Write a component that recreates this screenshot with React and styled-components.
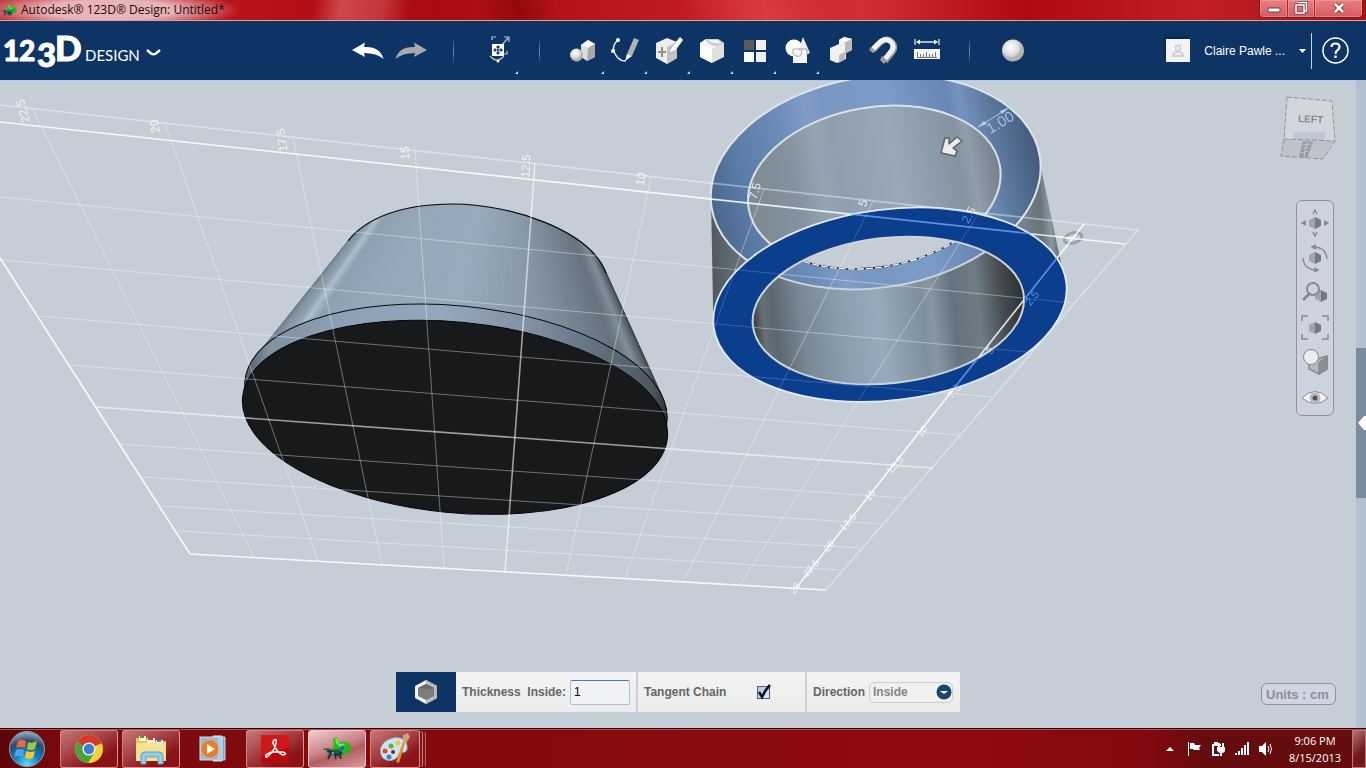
import React, { useState } from 'react';

import styled, { createGlobalStyle, css } from 'styled-components';

const GlobalStyle = createGlobalStyle`
  * {
    box-sizing: border-box;
  }

  html, body, #root {
    height: 100%;
    margin: 0;
  }

  body {
    font-family: "Liberation Sans", Arial, sans-serif;
    font-size: 12px;
    overflow: hidden;
  }

  button {
    padding: 0;
    border: 0;
    background: none;
    font: inherit;
    color: inherit;
  }

  svg {
    display: block;
  }
`;

const Desktop = styled.div`
  display: flex;
  flex-direction: column;
  height: 100vh;
`;

/* ---------- window title ---------- */

const TitleBar = styled.header`
  display: flex;
  align-items: flex-start;
  justify-content: space-between;
  height: 21px;
  padding: 0 3px 0 1px;
  border-bottom: 1px solid #e0a09c;
  background:
    radial-gradient(ellipse 130px 20px at 110px 10px, rgba(240, 205, 208, 0.85) 50%, rgba(240, 190, 190, 0) 100%),
    linear-gradient(100deg, transparent 23%, rgba(225, 110, 110, 0.6) 25%, rgba(205, 70, 75, 0.7) 28%, transparent 30%),
    linear-gradient(75deg, transparent 35%, rgba(120, 0, 0, 0.5) 38%, transparent 41%, transparent 50%, rgba(225, 70, 70, 0.7) 56%, transparent 61%),
    linear-gradient(to right, #c03038 0%, #b81016 20%, #a80c10 32%, #c01c20 50%, #d03034 63%, #b00a0e 75%, #c02024 88%, #a81014 100%);
`;

const WindowTitle = styled.h1`
  display: flex;
  align-items: center;
  gap: 4px;
  height: 20px;
  margin: 0;
  color: #1a0a0c;
  font: 400 12px/20px "Open Sans", "Noto Sans", sans-serif;
`;

const WindowButtons = styled.div`
  display: flex;
  height: 18px;
  border: 1px solid #7a2024;
  border-top: 0;
  border-radius: 0 0 5px 5px;
  overflow: hidden;
`;

const WindowButton = styled.button`
  display: flex;
  justify-content: center;
  width: ${props => (props.$wide ? '48px' : '27px')};
  background: linear-gradient(#e88084, #d85a60);
  box-shadow: inset 0 0 0 1px rgba(255, 190, 190, 0.35);

  & + & {
    border-left: 1px solid #9a2c30;
  }
`;

/* ---------- application toolbar ---------- */

const Toolbar = styled.div`
  display: flex;
  align-items: center;
  height: 59px;
  flex-shrink: 0;
  background: #0d3464;
  color: #fff;
`;

const Brand = styled.button`
  flex: 0 0 346px;
  text-align: left;
`;

const Tools = styled.nav`
  display: flex;
  height: 100%;
`;

const ToolButton = styled.button`
  position: relative;
  display: flex;
  align-items: center;
  justify-content: center;
  width: 43px;
  height: 59px;

  ${props => props.$menu && css`
    &::after {
      content: "";
      position: absolute;
      right: 0;
      bottom: 6px;
      border-left: 3px solid transparent;
      border-bottom: 3px solid #d5dde8;
    }
  `}
`;

const ToolSeparator = styled.div`
  display: flex;
  align-items: center;
  justify-content: center;
  width: 43px;

  &::after {
    content: "";
    width: 1px;
    height: 26px;
    background: linear-gradient(transparent, #7c8ea6, transparent);
  }
`;

const Account = styled.div`
  display: flex;
  align-items: center;
  height: 36px;
  margin-left: auto;
  padding-right: 17px;
`;

const AccountMenu = styled.button`
  display: flex;
  align-items: center;
  gap: 14px;
  height: 36px;
  padding-right: 5px;
  border-right: 1px solid #c9d3e0;
`;

const Avatar = styled.span`
  display: flex;
  align-items: center;
  justify-content: center;
  width: 24px;
  height: 23px;
  background: #f3f3f3;
  box-shadow: -2px -3px 2px #0b2a4c;
`;

const HelpButton = styled.button`
  margin-left: 10px;
`;

/* ---------- workspace ---------- */

const Workspace = styled.main`
  display: flex;
  flex: 1;
  min-height: 0;
`;

const Viewport = styled.section`
  position: relative;
  flex: 1;
  min-width: 0;
  overflow: hidden;
  background: #c5cdd7;
  box-shadow: inset 0 1px 0 #b6c9e2;
`;

const Scene = styled.svg`
  width: 100%;
  height: 100%;
`;

const GridLabel = styled.text`
  font-family: "Liberation Sans", Arial, sans-serif;
  text-anchor: middle;
  dominant-baseline: central;
`;

const SidePanel = styled.aside`
  display: flex;
  align-items: center;
  width: 10px;
  padding-top: 38px;
  background: #b2c0d2;
`;

const PanelHandle = styled.button`
  display: flex;
  align-items: center;
  justify-content: flex-end;
  width: 10px;
  height: 150px;
  background: #7a8b9d;
`;

const CubeHolder = styled.div`
  position: absolute;
  top: 14px;
  right: 18px;
`;

const ViewBar = styled.div`
  position: absolute;
  top: 120px;
  right: 22px;
  display: flex;
  flex-direction: column;
  justify-content: space-around;
  align-items: center;
  width: 38px;
  height: 216px;
  padding-top: 4px;
  border: 1px solid #8d939b;
  border-radius: 6px;
  background: #ccd3df;
`;

const UnitsButton = styled.button`
  position: absolute;
  right: 20px;
  bottom: 23px;
  width: 75px;
  height: 22px;
  padding-left: 4px;
  border: 1px solid #8d929b;
  border-radius: 6px;
  background: #d0d5e3;
  color: #8b9099;
  font-size: 13px;
  font-weight: 700;
  text-align: left;
`;

const PropertyBar = styled.form`
  position: absolute;
  left: 50%;
  bottom: 16px;
  display: flex;
  height: 40px;
  transform: translateX(-50%);
  background: linear-gradient(#f3f3f3, #ececec);
  color: #666;
  font-weight: 700;
`;

const PropertyIcon = styled.div`
  display: flex;
  align-items: center;
  justify-content: center;
  width: 60px;
  background: #0d3464;
`;

const PropertyCell = styled.div`
  display: flex;
  align-items: center;
  gap: ${props => props.$gap || '4px'};
  width: ${props => props.$width};
  padding-left: 6px;
  border-right: ${props => (props.$last ? '0' : '2px solid #cfcfcf')};
  white-space: pre;
`;

const NumberInput = styled.input`
  width: 60px;
  height: 25px;
  padding: 0 3px;
  border: 1px solid #9fc3dc;
  border-top-color: #4a7ba6;
  border-radius: 2px;
  background: #f1f2f3;
  color: #000;
  font: 400 12px "Liberation Sans", Arial, sans-serif;
`;

const CheckHolder = styled.span`
  position: relative;
  width: 16px;
  height: 16px;
`;

const CheckInput = styled.input`
  appearance: none;
  width: 13px;
  height: 13px;
  margin: 2px 0 0 1px;
  border: 1px solid #4a6484;
  background: linear-gradient(135deg, #b4c2d2, #e8edf3);
`;

const CheckMark = styled.svg`
  position: absolute;
  inset: 0;
  pointer-events: none;
`;

const SelectHolder = styled.span`
  position: relative;
  display: flex;
`;

const Select = styled.select`
  appearance: none;
  width: 84px;
  height: 21px;
  padding: 0 20px 0 3px;
  border: 1px solid #cdcdcd;
  border-radius: 5px;
  background: #f0f0f0;
  color: #858585;
  font: 700 12px "Liberation Sans", Arial, sans-serif;
`;

const SelectArrow = styled.svg`
  position: absolute;
  top: 2px;
  right: 1px;
  pointer-events: none;
`;

/* ---------- taskbar ---------- */

const Taskbar = styled.footer`
  display: flex;
  height: 40px;
  flex-shrink: 0;
  border-top: 1px solid #2c0306;
  box-shadow: inset 0 1px 0 #b05055;
  background: linear-gradient(to right, #5c0508 0%, #7c0a0d 5%, #860a0d 40%, #8f0a0e 70%, #83090d 84%, #650c0f 88%, #650c0f 100%);
`;

const StartButton = styled.button`
  width: 60px;
  padding-left: 8px;
`;

const TaskButtons = styled.div`
  display: flex;
  gap: 4px;
  padding-top: 1px;
`;

const TaskButton = styled.button`
  display: flex;
  align-items: center;
  justify-content: center;
  width: ${props => (props.$stacked ? '50px' : '58px')};
  height: 38px;
  border-radius: 3px;

  ${props => props.$open && css`
    border: 1px solid rgba(235, 165, 165, 0.75);
    background: linear-gradient(150deg, rgba(235, 180, 180, 0.65) 0%, rgba(200, 110, 115, 0.5) 45%, rgba(150, 30, 35, 0.45) 75%);
  `}

  ${props => props.$active && css`
    border-color: #f0c8c8;
    background: linear-gradient(160deg, #f0d0d0 0%, #c98388 45%, #b45c62 60%, #d79a9e 100%);
  `}

  ${props => props.$stacked && css`
    box-shadow: 3px 0 0 -1px #7d1418, 4px 0 0 -1px #c87b7e, 7px 0 0 -2px #7d1418, 8px 0 0 -2px #b4666a;
  `}
`;

const Tray = styled.div`
  display: flex;
  align-items: center;
  gap: 8px;
  margin-left: auto;
  color: #fff;
`;

const Clock = styled.time`
  width: 66px;
  font: 400 11px/17px "Open Sans", "Noto Sans", sans-serif;
  text-align: center;
  white-space: pre-line;
`;

const ShowDesktop = styled.button`
  width: 14px;
  height: 38px;
  margin-left: -4px;
  border: 1px solid #b97a7c;
  background: linear-gradient(135deg, #b07478, #74181c 60%);
`;

/* ---------- model data ---------- */

// each line: x1, y1, x2, y2, strength
const GRID_LINES = [
  [0, 105, 1138, 230, 'edge'],
  [0, 122, 1125, 244, 'axis'],
  [1138, 230, 826, 590, 'edge'],
  [190, 554, 826, 590, 'axis'],
  [0, 258, 190, 554, 'axis'],
  [1084, 224, 796, 588, 'axis'],
  [32, 108, 254, 557, 'minor'],
  [165, 123, 318, 560, 'minor'],
  [293, 138, 382, 565, 'minor'],
  [415, 151, 444, 568, 'minor'],
  [535, 163, 505, 572, 'major'],
  [651, 177, 566, 574, 'minor'],
  [764, 189, 625, 578, 'minor'],
  [873, 201, 683, 582, 'minor'],
  [979, 213, 740, 585, 'minor'],
  [0, 197, 1073, 303, 'minor'],
  [2, 260, 1028, 352, 'minor'],
  [39, 316, 992, 397, 'minor'],
  [70, 365, 959, 435, 'minor'],
  [96, 407, 932, 468, 'major'],
  [120, 444, 905, 498, 'minor'],
  [141, 477, 882, 524, 'minor'],
  [161, 506, 860, 548, 'minor'],
  [178, 531, 841, 570, 'minor']
];

const LINE_STYLES = {
  axis: { opacity: 0.85, width: 1.7 },
  edge: { opacity: 0.4, width: 1.7 },
  major: { opacity: 0.58, width: 1.6 },
  minor: { opacity: 0.38, width: 1 }
};

// text, x, y, angle, size
const GRID_LABELS = [
  ['22.5', 23, 111, -106, 12],
  ['20', 155, 126, -100, 12],
  ['17.5', 282, 140, -97, 12],
  ['15', 405, 153, -92, 12],
  ['12.5', 526, 166, -86, 12],
  ['10', 641, 179, -80, 12],
  ['7.5', 755, 191, -74, 12],
  ['5', 863, 203, -68, 12],
  ['2.5', 969, 215, -62, 12],
  ['2.5', 1032, 298, -52, 11],
  ['5', 990, 350, -50, 11],
  ['7.5', 954, 391, -50, 11],
  ['10', 922, 431, -48, 10],
  ['12.5', 895, 465, -48, 10],
  ['15', 870, 495, -48, 10],
  ['17.5', 848, 522, -48, 10],
  ['20', 829, 546, -48, 10],
  ['22.5', 811, 568, -48, 10],
  ['25', 795, 588, -48, 10]
];

const CONE_SHADES = [
  [0, 104, 118, 130],
  [0.07, 128, 145, 159],
  [0.12, 142, 160, 175],
  [0.145, 172, 191, 206],
  [0.18, 142, 160, 177],
  [0.3, 149, 167, 185],
  [0.47, 151, 169, 187],
  [0.6, 136, 152, 168],
  [0.72, 112, 127, 139],
  [0.8, 100, 112, 122],
  [0.86, 126, 141, 154],
  [0.91, 94, 105, 114],
  [1, 62, 68, 72]
];

const shadeAt = t => {
  const next = Math.max(1, CONE_SHADES.findIndex(stop => stop[0] >= t));
  const a = CONE_SHADES[next - 1];
  const b = CONE_SHADES[next];
  const k = (t - a[0]) / (b[0] - a[0]);
  const mix = [1, 2, 3].map(i => Math.round(a[i] + (b[i] - a[i]) * k));
  return `rgb(${mix.join(',')})`;
};

const bezier = (p, t) => [0, 1].map(i =>
  (1 - t) ** 3 * p[0][i] + 3 * (1 - t) ** 2 * t * p[1][i] + 3 * (1 - t) * t * t * p[2][i] + t ** 3 * p[3][i]
);

const coneTop = t => (t < 0.36
  ? bezier([[348, 241], [365, 219], [400, 204], [453, 204]], t / 0.36)
  : bezier([[453, 204], [510, 204], [590, 230], [606, 273]], (t - 0.36) / 0.64));

const coneBottom = t => {
  const angle = ((201 + 144 * t) * Math.PI) / 180;
  const tilt = (5.5 * Math.PI) / 180;
  const u = 211.8 * Math.cos(angle);
  const v = 95.3 * Math.sin(angle);
  return [456 + u * Math.cos(tilt) - v * Math.sin(tilt), 401 + u * Math.sin(tilt) + v * Math.cos(tilt)];
};

const SLICES = 120;

const ConeSide = () => (
  <g>
    {Array.from({ length: SLICES }, (_, i) => {
      const t0 = i / SLICES;
      const t1 = (i + 1) / SLICES;
      const color = shadeAt((t0 + t1) / 2);
      const points = [coneTop(t0), coneTop(t1), coneBottom(t1), coneBottom(t0)];
      return <polygon key={i} points={points.join(' ')} fill={color} stroke={color} strokeWidth="0.6" />;
    })}
  </g>
);

const Grid = ({ color, mask }) => (
  <g mask={`url(#${mask})`} stroke={color} fill={color}>
    {GRID_LINES.map(([x1, y1, x2, y2, kind], i) => (
      <line key={i} x1={x1} y1={y1} x2={x2} y2={y2} strokeWidth={LINE_STYLES[kind].width} opacity={LINE_STYLES[kind].opacity} />
    ))}
    {GRID_LABELS.map(([text, x, y, angle, size]) => (
      <GridLabel key={`${text}-${y}`} x={x} y={y} fontSize={size} stroke="none" opacity="0.8" transform={`rotate(${angle} ${x} ${y})`}>
        {text}
      </GridLabel>
    ))}
  </g>
);

const BackOuter = props => <ellipse cx="875.7" cy="182" rx="166.1" ry="105.6" transform="rotate(-8.7 875.7 182)" {...props} />;
const BackInner = props => <ellipse cx="874.3" cy="187.3" rx="127.4" ry="80" transform="rotate(-9.7 874.3 187.3)" {...props} />;
const FrontOuter = props => <ellipse cx="890" cy="304.7" rx="177.7" ry="95.4" transform="rotate(-7.2 890 304.7)" {...props} />;
const FrontInner = props => <ellipse cx="888.3" cy="310.5" rx="136.3" ry="72.7" transform="rotate(-6.4 888.3 310.5)" {...props} />;

const Model = () => (
  <Scene viewBox="0 80 1356 648" preserveAspectRatio="xMidYMid slice" aria-label="3D model">
    <defs>
      <linearGradient id="band" x1="0" x2="1">
        <stop offset="0" stopColor="#53606a" />
        <stop offset="0.05" stopColor="#8091a0" />
        <stop offset="0.2" stopColor="#8b9fb6" />
        <stop offset="0.45" stopColor="#95a8bb" />
        <stop offset="0.65" stopColor="#8092a5" />
        <stop offset="0.85" stopColor="#5d6a78" />
        <stop offset="0.96" stopColor="#4d5760" />
        <stop offset="1" stopColor="#282c30" />
      </linearGradient>
      <linearGradient id="cylinder" gradientUnits="userSpaceOnUse" x1="711" x2="1066" y1="240" y2="215">
        <stop offset="0" stopColor="#50595f" />
        <stop offset="0.08" stopColor="#66727b" />
        <stop offset="0.88" stopColor="#77838c" />
        <stop offset="0.93" stopColor="#68747c" />
        <stop offset="0.955" stopColor="#8b989f" />
        <stop offset="0.98" stopColor="#535c62" />
        <stop offset="1" stopColor="#41484c" />
      </linearGradient>
      <linearGradient id="preview" gradientUnits="userSpaceOnUse" x1="711" x2="1041" y1="190" y2="165">
        <stop offset="0" stopColor="#4b678c" />
        <stop offset="0.1" stopColor="#5a7ba5" />
        <stop offset="0.25" stopColor="#6c8cb9" />
        <stop offset="0.34" stopColor="#7e9cc6" />
        <stop offset="0.4" stopColor="#7897c3" />
        <stop offset="0.6" stopColor="#7b9ac5" />
        <stop offset="0.76" stopColor="#6886b3" />
        <stop offset="0.8" stopColor="#7593bf" />
        <stop offset="0.88" stopColor="#5c799f" />
        <stop offset="1" stopColor="#42597a" />
      </linearGradient>
      <linearGradient id="backWall" x1="0" x2="1">
        <stop offset="0" stopColor="#7c8993" />
        <stop offset="0.2" stopColor="#84939f" />
        <stop offset="0.3" stopColor="#94a4b0" />
        <stop offset="0.37" stopColor="#8f9faf" />
        <stop offset="0.6" stopColor="#98a8b8" />
        <stop offset="0.84" stopColor="#84939f" />
        <stop offset="0.89" stopColor="#909eaa" />
        <stop offset="1" stopColor="#74808a" />
      </linearGradient>
      <linearGradient id="frontWall" x1="0" x2="1">
        <stop offset="0" stopColor="#333a3e" />
        <stop offset="0.04" stopColor="#667077" />
        <stop offset="0.08" stopColor="#5b6770" />
        <stop offset="0.18" stopColor="#788793" />
        <stop offset="0.32" stopColor="#8a9dad" />
        <stop offset="0.46" stopColor="#98aabc" />
        <stop offset="0.62" stopColor="#7f909e" />
        <stop offset="0.66" stopColor="#8796a2" />
        <stop offset="0.74" stopColor="#65737e" />
        <stop offset="0.83" stopColor="#6f7b84" />
        <stop offset="0.93" stopColor="#41474b" />
        <stop offset="1" stopColor="#2c3032" />
      </linearGradient>
      <clipPath id="hole"><FrontInner /></clipPath>
      <mask id="offRing" maskUnits="userSpaceOnUse" x="0" y="0" width="1366" height="768">
        <rect width="1366" height="768" fill="#fff" />
        <FrontOuter fill="#000" />
        <FrontInner fill="#fff" />
      </mask>
      <mask id="onRing" maskUnits="userSpaceOnUse" x="0" y="0" width="1366" height="768">
        <FrontOuter fill="#fff" />
        <FrontInner fill="#000" />
      </mask>
    </defs>

    {/* cone */}
    <ConeSide />
    <path d="M348,241C365,219 400,204 453,204C510,204 590,230 606,273" fill="none" stroke="#0a0a0a" strokeWidth="1.2" />
    <ellipse cx="456" cy="401" rx="212" ry="95.3" transform="rotate(5.5 456 401)" fill="url(#band)" stroke="#0a0a0a" />
    <ellipse cx="455" cy="417.3" rx="213.4" ry="95.3" transform="rotate(5.5 455 417.3)" fill="#18191b" stroke="#050505" />

    {/* ring */}
    <path d="M711,196L713.300,322L1065,282L1041,168Z" fill="url(#cylinder)" />
    <BackOuter fill="url(#preview)" stroke="#dfe5eb" strokeWidth="2" />
    <BackInner fill="url(#backWall)" stroke="#dbe0e4" strokeWidth="2" />
    <FrontOuter fill="#0b3f8d" stroke="#e4ebf4" strokeWidth="1.8" />
    <FrontInner fill="url(#frontWall)" />
    <g clipPath="url(#hole)">
      <BackOuter fill="url(#preview)" stroke="#ccd3d9" strokeWidth="2" />
      <BackInner fill="#c5cdd7" stroke="#20262c" strokeWidth="1.600" />
      <BackInner fill="none" stroke="#f2f5f7" strokeWidth="1.400" strokeDasharray="7 2" />
    </g>
    <FrontInner fill="none" stroke="#d0d3d5" strokeWidth="2" />

    <Grid color="#ffffff" mask="offRing" />
    <Grid color="#6b9df5" mask="onRing" />
    <ellipse cx="1073" cy="238" rx="9" ry="5" transform="rotate(-15 1073 238)" fill="none" stroke="#9ba1a8" strokeWidth="3" />
    <line x1="1066" y1="247" x2="1080" y2="229" stroke="#f2f5f8" strokeWidth="1.5" />
    <line x1="1060" y1="237" x2="1088" y2="240" stroke="#f2f5f8" strokeWidth="1.5" />

    {/* thickness dimension */}
    <g stroke="#b5cff0" fill="#b5cff0">
      <path d="M978,127L1010,107" fill="none" />
      <path d="M978,127L984,121L987,124ZM1010,107L1000,111L1002,114Z" stroke="none" />
    </g>
    <GridLabel x="1000" y="122" fontSize="15" fill="#a4bfe3" transform="rotate(-31 1000 122)">1.00</GridLabel>
    <path d="M941,153L945,138L949,138L949,144L957,137L962,141L953,148L957,151L955,156Z" fill="#efedeb" stroke="#58636c" strokeWidth="1.5" strokeLinejoin="round" />
  </Scene>
);

/* ---------- icons ---------- */

const Frog = ({ size }) => (
  <svg width={size} height={Math.round(size * 0.8)} viewBox="0 0 30 24">
    <path d="M12,8L11,2L15,0L17,6Q23,3 28,7Q31,12 27,16Q21,20 15,17L9,14Z" fill="#28b51f" />
    <path d="M14,6L13,2L15,1L17,7Q21,6 24,7L18,10Z" fill="#6cf04a" />
    <path d="M1,12Q6,10 11,13L17,12L21,17L17,20L9,17L5,21L7,16Z" fill="#235a48" />
    <path d="M3,14L10,15L15,18L20,15M6,22L9,17M14,22L13,18M19,22L18,18" stroke="#0f3040" strokeWidth="1.5" fill="none" />
    <circle cx="20" cy="11" r="2" fill="#1760c8" />
    <circle cx="4" cy="14" r="1" fill="#90c8b8" />
    <circle cx="11" cy="16" r="1" fill="#90c8b8" />
  </svg>
);

const Logo = () => (
  <svg width="170" height="59" viewBox="0 21 170 59" fill="#fff" aria-label="123D Design">
    <g fontFamily="Lato, sans-serif" fontWeight="900" stroke="#fff">
      <text x="3" y="61" fontSize="28">1</text>
      <text x="19" y="61" fontSize="28">2</text>
      <text x="37" y="67" fontSize="33">3</text>
      <text x="55" y="61" fontSize="35">D</text>
    </g>
    <text x="85" y="61" fontSize="15" fontFamily="Lato, sans-serif">DESIGN</text>
    <path d="M147,50L151,53.500Q153.500,55 156,53.500L160,50" fill="none" stroke="#fff" strokeWidth="2.400" />
  </svg>
);

const ToolSvg = ({ children }) => <svg width="32" height="32" viewBox="0 0 32 32">{children}</svg>;

const UndoIcon = () => (
  <ToolSvg><path d="M0,15L13,7.500L12,12Q28,11 31.500,24Q25,18 12,18L13,22Z" fill="#fff" /></ToolSvg>
);

const RedoIcon = () => (
  <ToolSvg><path d="M32,15L19,7.500L20,12Q4,11 .5,24Q7,18 20,18L19,22Z" fill="#a9a9a9" /></ToolSvg>
);

const TransformIcon = () => (
  <ToolSvg>
    <g transform="translate(3 -1)">
      <g fill="none" stroke="#b9c6d6" strokeWidth="1.200">
        <path d="M8,6V3H12M23,17V20H20M17,12L24,4M20,3H25V8M6,22Q13,30 20,22" />
      </g>
      <rect x="8" y="10" width="12" height="12" fill="#fff" />
      <path d="M14,12V20M10,16H18M12.500,13.500L14,12L15.500,13.500M12.500,18.500L14,20L15.500,18.500M11.500,14.500L10,16L11.500,17.500M16.500,14.500L18,16L16.500,17.500" fill="none" stroke="#0d3464" strokeWidth="1.200" />
      <circle cx="14" cy="27" r="1.500" fill="#fff" />
    </g>
  </ToolSvg>
);

const PrimitivesIcon = () => (
  <ToolSvg>
    <path d="M14,10L21,5L28,9V22L20,26L14,22Z" fill="#dcdcdc" />
    <path d="M14,10L21,5L28,9L21,13Z" fill="#f8f8f8" />
    <path d="M21,13L28,9V22L20,26Z" fill="#a8a8a8" />
    <circle cx="9.500" cy="20" r="6.500" fill="url(#ball)" />
  </ToolSvg>
);

const SketchIcon = () => (
  <ToolSvg>
    <path d="M8,5Q-1,13 8,23Q11,26 16,26" fill="none" stroke="#e7ecf2" strokeWidth="1.500" />
    <circle cx="8" cy="5" r="2" fill="#fff" />
    <circle cx="3" cy="16" r="2" fill="#fff" />
    <path d="M17,19L24,3L29,5L22,21Z" fill="#b2b2b2" />
    <path d="M17,19L15,26L22,21Z" fill="#fff" />
  </ToolSvg>
);

const ConstructIcon = () => (
  <ToolSvg>
    <path d="M3,8L14,3L24,7V23L14,29L3,23Z" fill="#eeeeee" />
    <path d="M14,12L24,7V23L14,29Z" fill="#c4c4c4" />
    <path d="M9,12V22M5,17H13" stroke="#8c8c8c" strokeWidth="2" />
    <path d="M18,13L27,2L30,5L22,16L16,18Z" fill="#fff" stroke="#9a9a9a" strokeWidth="0.600" />
  </ToolSvg>
);

const ModifyIcon = () => (
  <ToolSvg>
    <path d="M4,8L10,4H22L28,8V22L16,28L4,22Z" fill="#e0e0e0" />
    <path d="M4,8L16,14V28L4,22Z" fill="#fcfcfc" />
    <path d="M4,8L10,4Q11,11 22,11L16,14Z" fill="#f4f4f4" />
    <path d="M10,4H22L28,8L22,11Q11,11 10,4Z" fill="#cbcbcb" />
    <path d="M12,5H22L25,8Q15,9 12,5Z" fill="#f2f2f2" />
  </ToolSvg>
);

const PatternIcon = () => (
  <ToolSvg>
    <rect x="5" y="5" width="10" height="10" fill="#5b5b5b" />
    <rect x="17" y="5" width="10" height="10" fill="#f1f1f1" />
    <rect x="5" y="17" width="10" height="10" fill="#fafafa" />
    <rect x="17" y="17" width="10" height="10" fill="#efefef" />
  </ToolSvg>
);

const GroupIcon = () => (
  <ToolSvg>
    <circle cx="12" cy="13" r="8.500" fill="#fff" />
    <path d="M21,2L28,18Q22,21 16,17Z" fill="#eeeeee" />
    <rect x="11" y="16" width="14" height="12" fill="#f6f6f6" />
    <path d="M11,14H25V20M11,14V19M17,14Q21,14 19,20Q16,23 11,19" fill="none" stroke="#a6a6a6" />
  </ToolSvg>
);

const CombineIcon = () => (
  <ToolSvg>
    <path d="M14,5L19,2L27,4V15L21,18V24L12,28L5,25V13L14,9Z" fill="#f0f0f0" />
    <path d="M20,7L27,4V15L20,19ZM14,20L20,17V24L14,28Z" fill="#b9b9b9" />
    <path d="M14,5L19,2L27,4L20,7Z" fill="#fff" />
  </ToolSvg>
);

const MagnetIcon = () => (
  <ToolSvg>
    <path d="M5,15L12,8Q19,2 24,7Q29,13 22,20L17,26" fill="none" stroke="#999" strokeWidth="6" />
    <path d="M5,14L12,7Q18,2 23,7Q28,12 21,19L16,25" fill="none" stroke="#f2f2f2" strokeWidth="5" />
    <path d="M3,12L8,16L5,18L1,15ZM14,21L19,25L16,29L12,25Z" fill="#9c9c9c" />
  </ToolSvg>
);

const MeasureIcon = () => (
  <ToolSvg>
    <path d="M4,4V10M28,4V10M6,7H26" stroke="#dce4ee" strokeWidth="1.300" />
    <path d="M5,7L9,4.500V9.500ZM27,7L23,4.500V9.500Z" fill="#fff" />
    <rect x="3" y="14" width="26" height="10" fill="#f4f4f4" />
    <path d="M6.500,22V17M9.500,22V19M12.500,22V19M15.500,22V17M18.500,22V19M21.500,22V19M24.500,22V17" stroke="#777" fill="none" />
    <path d="M6,22.500H26" stroke="#777" />
  </ToolSvg>
);

const MaterialIcon = () => (
  <ToolSvg>
    <defs>
      <radialGradient id="ball" cx="0.4" cy="0.35">
        <stop offset="0" stopColor="#fdfdfd" />
        <stop offset="0.7" stopColor="#dedede" />
        <stop offset="1" stopColor="#b2b2b2" />
      </radialGradient>
    </defs>
    <circle cx="16" cy="15.500" r="11" fill="url(#ball)" />
  </ToolSvg>
);

const TOOLS = [
  { label: 'Undo', icon: UndoIcon },
  { label: 'Redo', icon: RedoIcon },
  null,
  { label: 'Transform', icon: TransformIcon, menu: true },
  null,
  { label: 'Primitives', icon: PrimitivesIcon, menu: true },
  { label: 'Sketch', icon: SketchIcon, menu: true },
  { label: 'Construct', icon: ConstructIcon, menu: true },
  { label: 'Modify', icon: ModifyIcon, menu: true },
  { label: 'Pattern', icon: PatternIcon, menu: true },
  { label: 'Grouping', icon: GroupIcon, menu: true },
  { label: 'Combine', icon: CombineIcon },
  { label: 'Snap', icon: MagnetIcon },
  { label: 'Measure', icon: MeasureIcon },
  null,
  { label: 'Material', icon: MaterialIcon }
];

const Hexagon = ({ x = 14, y = 14 }) => (
  <g transform={`translate(${x} ${y})`} stroke="none">
    <path d="M-6,-3L0,-6V6L-6,3Z" fill="#a3a5a8" />
    <path d="M0,-6L6,-3V3L0,6Z" fill="#77797d" />
  </g>
);

const ViewSvg = ({ children }) => (
  <svg width="28" height="28" viewBox="0 0 28 28" fill="none" stroke="#85898f" strokeWidth="1.400">{children}</svg>
);

const VIEW_TOOLS = [
  ['Pan', <><Hexagon /><path d="M12,5L14,1L16,5M12,23L14,27L16,23M5,12L1,14L5,16M23,12L27,14L23,16M1,14H5M23,14H27" /></>],
  ['Orbit', <><Hexagon /><path d="M12,3Q25,3 26,15M2,14Q3,26 16,26M15,1L11,3L15,5M13,24L17,26L13,28" /></>],
  ['Zoom', <><Hexagon x={20} y={17} /><circle cx="12" cy="10" r="6" fill="#ccd3df" strokeWidth="2" /><path d="M8,15L2,21" strokeWidth="2.600" /></>],
  ['Fit', <><Hexagon /><path d="M1,7V2H7M21,2H27V7M27,20V25H21M7,25H1V20" /></>],
  ['Display', <><path d="M16,10L26,7V20L18,25L8,20V12" fill="#b5b8bc" /><path d="M18,14L26,8V20L18,25Z" fill="#8d9094" /><circle cx="10" cy="8" r="7.500" fill="#eceded" strokeWidth="1" /></>],
  ['Visibility', <><path d="M1,14Q14,1 27,14Q14,25 1,14Z" fill="#f5f5f4" strokeWidth="1" /><circle cx="14" cy="14" r="5.500" fill="#bdbab6" stroke="none" /><circle cx="14" cy="14" r="2.500" fill="#55524f" stroke="none" /></>]
];

const ViewCube = () => (
  <svg width="58" height="68" viewBox="1280 94 58 68">
    <path d="M1287,97L1332,101L1335,141L1284,139Z" fill="#d2d5d9" />
    <path d="M1284,139L1335,141L1323,159L1281,156Z" fill="#bec3c9" />
    <path d="M1294,132H1325V142H1294Z" fill="#c0c7d3" />
    <path d="M1287,97L1332,101L1335,141L1323,159L1281,156L1284,139ZM1284,139L1335,141" fill="none" stroke="#8e9399" strokeDasharray="5 2" />
    <text x="1298" y="122" fontFamily="Liberation Sans, Arial, sans-serif" fontSize="10" fontWeight="700" fill="#84888e" transform="rotate(2 1298 122)">LEFT</text>
    <path d="M1303,141L1313,142L1307,158L1299,157Z" fill="#959ba2" />
    <path d="M1303,145L1311,144M1303,149L1309,147M1301,153L1308,151M1307,142L1304,157" stroke="#c4c9cf" fill="none" />
  </svg>
);

const StartOrb = () => (
  <svg width="38" height="38" viewBox="0 0 38 38">
    <defs>
      <radialGradient id="orb" cx="0.5" cy="0.95" r="0.9">
        <stop offset="0" stopColor="#5fe0ff" />
        <stop offset="0.4" stopColor="#1580bd" />
        <stop offset="0.75" stopColor="#284b6e" />
        <stop offset="1" stopColor="#8a9fb5" />
      </radialGradient>
    </defs>
    <circle cx="19" cy="19" r="17.500" fill="url(#orb)" stroke="#8ea6b8" />
    <path d="M10,11Q14,9 18,11L17,18Q13,16 8,18Z" fill="#f0683a" />
    <path d="M20,12Q24,14 29,11L27,19Q23,21 19,19Z" fill="#9ac83c" />
    <path d="M8,20Q12,18 16,20L15,27Q11,25 6,27Z" fill="#4aa4e6" />
    <path d="M18,21Q22,23 27,21L25,28Q21,30 17,28Z" fill="#fbc52d" />
  </svg>
);

const ChromeIcon = () => (
  <svg width="30" height="30" viewBox="0 0 30 30">
    <circle cx="15" cy="15" r="14" fill="#f3d23a" />
    <path d="M15,15L2.900,8A14,14 0 0 1 27.600,9Z" fill="#d9372a" />
    <path d="M15,15L2.900,8A14,14 0 0 0 14,29L21,18Z" fill="#4aa23c" />
    <path d="M15,8.500H27.300" stroke="#d9372a" strokeWidth="2" />
    <circle cx="15" cy="15" r="6.600" fill="#f4f4f4" />
    <circle cx="15" cy="15" r="5.200" fill="#3c7fd0" />
  </svg>
);

const FolderIcon = () => (
  <svg width="34" height="32" viewBox="0 0 34 32">
    <path d="M2,5H12L14,8H32V28H2Z" fill="#e4c563" />
    <path d="M5,3H12V8H5Z" fill="#fbf3d0" /><path d="M6,3H10V5H6Z" fill="#3da13a" />
    <path d="M13,5H21V10H13Z" fill="#fff6d8" /><path d="M14,5H19V7H14Z" fill="#cc3f2c" />
    <path d="M22,7H29V11H22Z" fill="#fff6d8" /><path d="M23,7H27V9H23Z" fill="#3d83c9" />
    <path d="M2,10H32V28H2Z" fill="#f5e192" />
    <path d="M7,31V23Q7,19 11,19H25Q29,19 29,23V31H24V24H12V31Z" fill="#94cde8" stroke="#5a9fc4" />
  </svg>
);

const PlayerIcon = () => (
  <svg width="28" height="28" viewBox="0 0 28 28">
    <path d="M18,2H26V25H18Z" fill="#7fa9c8" stroke="#c6dcea" />
    <path d="M14,1H23V26H14Z" fill="#a2c3da" stroke="#d8e8f2" />
    <rect x="1" y="2" width="19" height="23" fill="#9cb6cc" stroke="#cfe0ee" />
    <circle cx="11" cy="14" r="8.500" fill="#ee7b1c" />
    <path d="M8,9L16,14L8,19Z" fill="#fff" />
  </svg>
);

const ReaderIcon = () => (
  <svg width="28" height="28" viewBox="0 0 28 28">
    <rect width="28" height="28" fill="#b8090d" />
    <path d="M0,0H28V12L0,22Z" fill="#d0181a" />
    <path d="M13,5Q16,3 15,8Q14,16 6,22Q4,23 5,20Q9,16 22,17Q27,19 22,20Q16,18 12,8Q12,6 13,5Z" fill="none" stroke="#fff" strokeWidth="1.500" />
  </svg>
);

const PaintIcon = () => (
  <svg width="32" height="32" viewBox="0 0 32 32">
    <path d="M14,5C24,3 29,9 28,16C27,21 22,18 20,21C18,27 10,30 4,25C-1,19 1,8 14,5Z" fill="#cfe2f1" stroke="#8eaac0" />
    <circle cx="6" cy="18" r="2.500" fill="#d84a3a" />
    <circle cx="12" cy="13" r="2.500" fill="#63b13d" />
    <circle cx="19" cy="10" r="2.500" fill="#f1c73b" />
    <circle cx="10" cy="24" r="2.500" fill="#3c7fca" />
    <circle cx="14" cy="19" r="2" fill="#7c2327" />
    <path d="M17,29L24,9L26,10L20,30Z" fill="#e68a2e" />
    <path d="M24,9L24,2L29,0L31,4L27,10Z" fill="#c8a47a" />
  </svg>
);

const TASKS = [
  { label: 'Chrome', icon: <ChromeIcon />, open: true },
  { label: 'Explorer', icon: <FolderIcon />, open: true },
  { label: 'Media Player', icon: <PlayerIcon /> },
  { label: 'Adobe Reader', icon: <ReaderIcon />, open: true },
  { label: '123D Design', icon: <Frog size={30} />, open: true, active: true },
  { label: 'Paint', icon: <PaintIcon />, open: true, stacked: true }
];

const TRAY = [
  ['Show hidden icons', <path d="M4,10L8,6L12,10Z" />],
  ['Action Center', <><path d="M2,1H3V15H2Z" /><path d="M4,2H8L9,4H15L13,7L14,9H8L7,8H4Z" /></>],
  ['Power', <><path d="M2,3H11V5H4V13H9V15H2ZM4,1H8V3H4Z" /><path d="M7,6H15V9Q15,12 12,12V15H10V12Q7,11 7,9ZM8,2H10V6H8ZM12,2H14V6H12Z" /></>],
  ['Network', <path d="M1,12H3V14H1ZM4,10H6V14H4ZM7,7H9V14H7ZM10,4H12V14H10ZM13,1H15V14H13Z" />],
  ['Volume', <><path d="M1,5H4L8,1V15L4,11H1Z" /><path d="M10,5Q12,8 10,11M12,3Q15,8 12,13" fill="none" stroke="#fff" /></>]
];

const App = () => {
  const [thickness, setThickness] = useState('1');
  const [chained, setChained] = useState(true);
  const [direction, setDirection] = useState('Inside');

  return (
    <Desktop>
      <GlobalStyle />

      <TitleBar>
        <WindowTitle>
          <Frog size={16} />
          Autodesk® 123D® Design: Untitled*
        </WindowTitle>
        <WindowButtons>
          <WindowButton aria-label="Minimize">
            <svg width="16" height="16" viewBox="0 0 16 16"><rect x="2" y="8" width="12" height="4" rx="1" fill="#fff" stroke="#5d4044" /></svg>
          </WindowButton>
          <WindowButton aria-label="Restore">
            <svg width="16" height="16" viewBox="0 0 16 16" fill="none">
              <path d="M5,2.500H13.500V11H11M3,5H11V13H3Z" stroke="#5d4044" strokeWidth="3" />
              <path d="M5,2.500H13.500V11H11M3,5H11V13H3Z" stroke="#fff" strokeWidth="1.500" />
            </svg>
          </WindowButton>
          <WindowButton $wide aria-label="Close">
            <svg width="16" height="16" viewBox="0 0 16 16">
              <path d="M4,4L12,12M12,4L4,12" stroke="#5d4044" strokeWidth="4.500" />
              <path d="M4,4L12,12M12,4L4,12" stroke="#fff" strokeWidth="2.500" />
            </svg>
          </WindowButton>
        </WindowButtons>
      </TitleBar>

      <Toolbar>
        <Brand><Logo /></Brand>
        <Tools>
          {TOOLS.map((tool, index) => (tool
            ? <ToolButton key={tool.label} $menu={tool.menu} aria-label={tool.label}><tool.icon /></ToolButton>
            : <ToolSeparator key={index} />
          ))}
        </Tools>
        <Account>
          <AccountMenu>
            <Avatar>
              <svg width="14" height="14" viewBox="0 0 14 14" fill="none" stroke="#d2d2d2" strokeWidth="2">
                <circle cx="7" cy="4" r="2.500" />
                <path d="M2,12Q2,8 7,8Q12,8 12,12Z" />
              </svg>
            </Avatar>
            Claire Pawle ...
            <svg width="7" height="4" viewBox="0 0 7 4"><path d="M0,0H7L3.500,4Z" fill="#fff" /></svg>
          </AccountMenu>
          <HelpButton aria-label="Help">
            <svg width="27" height="27" viewBox="0 0 27 27" fill="none" stroke="#fff">
              <circle cx="13.500" cy="13.500" r="12.500" strokeWidth="1.500" />
              <path d="M9.500,10Q9.500,6.500 13.500,6.500Q17.500,6.500 17.500,10Q17.500,12 15.500,13.200Q13.500,14.500 13.500,17" strokeWidth="2.200" />
              <path d="M13.500,18.500V21" strokeWidth="2.400" />
            </svg>
          </HelpButton>
        </Account>
      </Toolbar>

      <Workspace>
        <Viewport>
          <Model />
          <CubeHolder><ViewCube /></CubeHolder>
          <ViewBar>
            {VIEW_TOOLS.map(([label, drawing]) => (
              <button key={label} aria-label={label}><ViewSvg>{drawing}</ViewSvg></button>
            ))}
          </ViewBar>

          <PropertyBar onSubmit={e => e.preventDefault()}>
            <PropertyIcon>
              <svg width="26" height="26" viewBox="0 0 26 26">
                <path d="M13,1L24,7V19L13,25L2,19V7Z" fill="#f4f4f4" />
                <path d="M13,1L24,7V19L13,25V20L20,17V9L13,6Z" fill="#b9b9b9" />
                <path d="M13,5L21,9V17L13,21L5,17V9Z" fill="#7d7d7d" />
                <path d="M13,5L21,9L13,10L5,9Z" fill="#6a6a6a" />
              </svg>
            </PropertyIcon>
            <PropertyCell $width="182px">
              <label htmlFor="thickness">{'Thickness  Inside:'}</label>
              <NumberInput id="thickness" value={thickness} onChange={e => setThickness(e.target.value)} />
            </PropertyCell>
            <PropertyCell $width="169px" $gap="30px">
              <label htmlFor="chain">Tangent Chain</label>
              <CheckHolder>
                <CheckInput id="chain" type="checkbox" checked={chained} onChange={e => setChained(e.target.checked)} />
                {chained && (
                  <CheckMark width="16" height="16" viewBox="0 0 16 16">
                    <path d="M3,8L6,13Q9,6 14,1" fill="none" stroke="#0b1a2c" strokeWidth="2.600" />
                  </CheckMark>
                )}
              </CheckHolder>
            </PropertyCell>
            <PropertyCell $width="153px" $last>
              <label htmlFor="direction">Direction</label>
              <SelectHolder>
                <Select id="direction" value={direction} onChange={e => setDirection(e.target.value)}>
                  <option>Inside</option>
                  <option>Outside</option>
                </Select>
                <SelectArrow width="16" height="16" viewBox="0 0 16 16">
                  <circle cx="8" cy="8" r="7.500" fill="#1b456f" />
                  <path d="M4,7H12L8,10Z" fill="#fff" />
                </SelectArrow>
              </SelectHolder>
            </PropertyCell>
          </PropertyBar>

          <UnitsButton>Units : cm</UnitsButton>
        </Viewport>
        <SidePanel>
          <PanelHandle aria-label="Open panel">
            <svg width="8" height="14" viewBox="0 0 8 14"><path d="M0,7L6,0H8V14H6Z" fill="#fff" /></svg>
          </PanelHandle>
        </SidePanel>
      </Workspace>

      <Taskbar>
        <StartButton aria-label="Start"><StartOrb /></StartButton>
        <TaskButtons>
          {TASKS.map(task => (
            <TaskButton key={task.label} $open={task.open} $active={task.active} $stacked={task.stacked} aria-label={task.label}>
              {task.icon}
            </TaskButton>
          ))}
        </TaskButtons>
        <Tray>
          {TRAY.map(([label, drawing]) => (
            <button key={label} aria-label={label}>
              <svg width="16" height="16" viewBox="0 0 16 16" fill="#fff">{drawing}</svg>
            </button>
          ))}
          <Clock>{'9:06 PM\n8/15/2013'}</Clock>
          <ShowDesktop aria-label="Show desktop" />
        </Tray>
      </Taskbar>
    </Desktop>
  );
};

export default App;
